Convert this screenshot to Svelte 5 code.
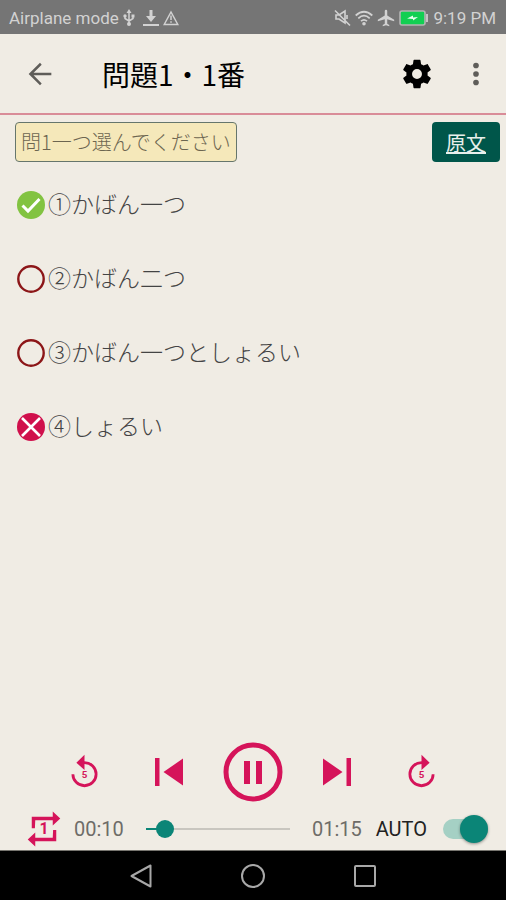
<script>
  const options = [
    { id: 1, text: '①かばん一つ', state: 'correct' },
    { id: 2, text: '②かばん二つ', state: 'open' },
    { id: 3, text: '③かばん一つとしょるい', state: 'open' },
    { id: 4, text: '④しょるい', state: 'wrong' }
  ];
  const duration = 75;

  let picked = $state(4);
  let position = $state(10);
  let auto = $state(true);

  const clock = (s) =>
    String(Math.floor(s / 60)).padStart(2, '0') + ':' + String(s % 60).padStart(2, '0');
</script>

<div class="screen">
  <div class="status">
    <span>Airplane mode</span>
    <svg class="usb" width="12" height="18" viewBox="0 0 12 18">
      <path d="M6 2v13M2 7v2.500l4 2.500 4-2.500V7" fill="none" stroke="currentColor" stroke-width="1.500" />
      <path d="M6 0l2.500 4h-5z" fill="currentColor" />
      <circle cx="6" cy="15" r="2" fill="currentColor" />
      <circle cx="2" cy="7" r="1.700" fill="currentColor" />
      <path d="M8.500 5.500h3v3h-3z" fill="currentColor" />
    </svg>
    <svg width="16" height="18" viewBox="0 0 16 18" fill="currentColor">
      <path d="M6.500 1h3v6H13l-5 6-5-6h3.500zM0 15h16v2H0z" />
    </svg>
    <svg width="16" height="18" viewBox="0 0 16 18" fill="none" stroke="currentColor" stroke-width="1.500">
      <path d="M8 3l6.800 12.500H1.200zM8 6.500v4.500M8 12.200v1.600" />
    </svg>
    <span class="fill"></span>
    <svg width="17" height="18" viewBox="0 0 17 18" fill="none" stroke="currentColor" stroke-width="1.600">
      <path d="M2 6h3l6-4v12l-6-4H2zM1 1.500l15 15M13 6v4" />
    </svg>
    <svg width="18" height="18" viewBox="0 0 18 18" fill="none" stroke="currentColor" stroke-width="1.700">
      <path d="M.7 6.500Q9-1 17.300 6.500M3.300 9.400Q9 4 14.700 9.400M6 12.200Q9 9.600 12 12.200" />
      <circle cx="9" cy="14.800" r="1.800" fill="currentColor" stroke="none" />
    </svg>
    <svg width="18" height="18" viewBox="1 1 22 22" fill="currentColor">
      <path d="M22 16v-2l-8.500-5V3.500a1.500 1.500 0 0 0-3 0V9L2 14v2l8.500-2.500V19L8 20.500V22l4-1 4 1v-1.500L13.500 19v-5.500z" />
    </svg>
    <svg width="30" height="16" viewBox="0 0 30 16">
      <rect x="1" y="1" width="25" height="14" rx="2" fill="#12cf52" stroke="#b4b4b4" stroke-width="1.600" />
      <path d="M27 4h2v8h-2z" fill="#c4c4c4" />
      <path d="M8 8.500l6-3v2l5-.5-5 3.500V9z" fill="#e8fff0" />
    </svg>
    <span>9:19 PM</span>
  </div>

  <header>
    <button aria-label="Back">
      <svg width="34" height="34" viewBox="0 0 24 24" fill="#5f5d59">
        <path d="M20 11.100H7.500l5.700-5.700L12 4l-8 8 8 8 1.200-1.300-5.700-5.800H20z" />
      </svg>
    </button>
    <h1>問題1・1番</h1>
    <button aria-label="Settings">
      <svg width="34" height="34" viewBox="0 0 24 24" fill="#000">
        <path d="M19.430 12.980c.04-.32.07-.64.07-.98s-.03-.66-.07-.98l2.110-1.650c.19-.15.24-.42.12-.64l-2-3.460c-.12-.22-.39-.3-.61-.22l-2.490 1c-.52-.4-1.080-.73-1.690-.98l-.38-2.650C14.460 2.180 14.250 2 14 2h-4c-.25 0-.46.18-.49.42l-.38 2.650c-.61.25-1.170.59-1.690.98l-2.490-1c-.23-.09-.49 0-.61.22l-2 3.460c-.13.22-.07.49.12.64l2.110 1.650c-.04.32-.07.65-.07.98s.03.66.07.98l-2.110 1.650c-.19.15-.24.42-.12.64l2 3.460c.12.22.39.3.61.22l2.490-1c.52.4 1.080.73 1.690.98l.38 2.650c.03.24.24.42.49.42h4c.25 0 .46-.18.49-.42l.38-2.650c.61-.25 1.170-.59 1.690-.98l2.490 1c.23.09.49 0 .61-.22l2-3.460c.12-.22.07-.49-.12-.64zM12 15.500a3.500 3.500 0 1 1 0-7 3.500 3.500 0 0 1 0 7z" />
      </svg>
    </button>
    <button class="more" aria-label="More options">
      <svg width="34" height="34" viewBox="0 0 24 24" fill="#5f5d59">
        <circle cx="12" cy="6" r="2" /><circle cx="12" cy="12" r="2" /><circle cx="12" cy="18" r="2" />
      </svg>
    </button>
  </header>

  <main>
    <div class="top">
      <p id="question">問1一つ選んでください</p>
      <button class="script">原文</button>
    </div>
    <div class="options" role="radiogroup" aria-labelledby="question">
      {#each options as o (o.id)}
        <label>
          <input type="radio" name="answer" value={o.id} bind:group={picked} />
          <svg width="28" height="28" viewBox="0 0 28 28" fill="none">
            {#if o.state === 'correct'}
              <circle cx="14" cy="14" r="14" fill="#82c341" />
              <path d="M5.500 14.500l5.500 5.500L22.500 8" stroke="#fff" stroke-width="3" />
            {:else if o.state === 'wrong'}
              <circle cx="14" cy="14" r="14" fill="#d0104c" />
              <path d="M5 5l18 18M23 5L5 23" stroke="#fff" stroke-width="2.600" />
            {:else}
              <circle cx="14" cy="14" r="12.700" stroke="#8c1618" stroke-width="2.400" />
            {/if}
          </svg>
          <span>{o.text}</span>
        </label>
      {/each}
    </div>
  </main>

  <div class="player">
    <div class="controls">
      <button aria-label="Back 5 seconds">
        <svg width="39" height="39" viewBox="0 0 24 24" fill="currentColor">
          <path d="M12 5V1L7 6l5 4.500V6.700a6.300 6.300 0 1 1-6.300 6.300H4a8 8 0 1 0 8-8z" />
          <text x="12" y="15.500" font-size="6" text-anchor="middle">5</text>
        </svg>
      </button>
      <button aria-label="Previous">
        <svg width="30" height="28" viewBox="0 0 30 28" fill="currentColor">
          <path d="M1 0h4.500v28H1zM29 .5v27L9.500 14z" />
        </svg>
      </button>
      <button aria-label="Pause">
        <svg width="60" height="60" viewBox="0 0 60 60" fill="currentColor">
          <circle cx="30" cy="30" r="27" fill="none" stroke="currentColor" stroke-width="5" />
          <path d="M21 19h6v23h-6zM33 19h6v23h-6z" />
        </svg>
      </button>
      <button aria-label="Next">
        <svg width="30" height="28" viewBox="0 0 30 28" fill="currentColor">
          <path d="M24.500 0H29v28h-4.500zM1 .5v27L20.500 14z" />
        </svg>
      </button>
      <button aria-label="Forward 5 seconds">
        <svg width="39" height="39" viewBox="0 0 24 24" fill="currentColor">
          <path d="M12 5V1l5 5-5 4.500V6.700a6.300 6.300 0 1 0 6.300 6.300H20a8 8 0 1 1-8-8z" />
          <text x="12" y="15.500" font-size="6" text-anchor="middle">5</text>
        </svg>
      </button>
    </div>
    <div class="progress">
      <button class="repeat" aria-label="Repeat one">
        <svg width="44" height="42" viewBox="0 0 24 24" fill="currentColor">
          <path d="M7 7h10v3l4.300-4L17 2v3H5v6.500h1.800zM17 17H7v-3l-4.300 4L7 22v-3h12v-6.500h-1.800z" />
          <text x="12" y="15" font-size="9" text-anchor="middle">1</text>
        </svg>
      </button>
      <span class="time">{clock(position)}</span>
      <input
        class="seek"
        type="range"
        min="0"
        max={duration}
        bind:value={position}
        aria-label="Position"
        style="--played: {position / duration}"
      />
      <span class="time">{clock(duration)}</span>
      <label class="auto" for="auto">AUTO</label>
      <input id="auto" class="switch" type="checkbox" role="switch" bind:checked={auto} />
    </div>
  </div>

  <nav>
    <button aria-label="System back">
      <svg width="24" height="24" viewBox="0 0 24 24"><path d="M21.500 1.500v21L2.500 12z" /></svg>
    </button>
    <button aria-label="Home">
      <svg width="26" height="26" viewBox="0 0 26 26"><circle cx="13" cy="13" r="11" /></svg>
    </button>
    <button aria-label="Recent apps">
      <svg width="24" height="24" viewBox="0 0 24 24"><rect x="2" y="2" width="20" height="20" rx="1" /></svg>
    </button>
  </nav>
</div>

<style>
  :global(body) {
    margin: 0;
  }
  .screen {
    min-height: 100vh;
    display: flex;
    flex-direction: column;
    background: #f0ece4;
    font-family: Roboto, 'Noto Sans CJK JP', sans-serif;
    color: #555;
  }
  button {
    border: 0;
    padding: 0;
    background: none;
    color: inherit;
    font: inherit;
    display: flex;
    align-items: center;
    justify-content: center;
    cursor: pointer;
  }
  svg {
    display: block;
    flex: none;
  }
  .status {
    height: 34px;
    box-sizing: border-box;
    padding: 2px 10px 0 9px;
    display: flex;
    align-items: center;
    gap: 4px;
    background: #757575;
    color: #d2d2d2;
    font-size: 17px;
  }
  .usb {
    margin-right: 4px;
  }
  .fill {
    flex: 1;
  }
  header {
    height: 79px;
    padding: 0 13px 0 23px;
    display: flex;
    align-items: center;
    border-bottom: 2px solid #d98c98;
  }
  h1 {
    flex: 1;
    margin: 0 0 0 45px;
    font: 400 28px/40px 'Noto Sans CJK JP', sans-serif;
    color: #000;
  }
  .more {
    margin-left: 25px;
  }
  main {
    flex: 1;
    padding: 7px 6px 0 15px;
    font-family: 'Noto Sans CJK JP', sans-serif;
  }
  .top {
    display: flex;
    justify-content: space-between;
    align-items: center;
  }
  .top p {
    margin: 0;
    padding: 0 5px;
    border: 1px solid #66766c;
    border-radius: 4px;
    background: #f5e8ba;
    color: #6c6550;
    font-size: 20px;
    font-weight: 300;
    line-height: 38px;
  }
  .script {
    width: 68px;
    height: 40px;
    border-radius: 4px;
    background: #00564a;
    color: #e8f0ec;
    font-size: 20px;
    text-decoration: underline;
  }
  .options {
    margin-top: 6px;
  }
  .options label {
    position: relative;
    height: 74px;
    padding-left: 2px;
    display: flex;
    align-items: center;
    gap: 3px;
    font-size: 23px;
    font-weight: 300;
    color: #444;
  }
  .options span {
    padding-bottom: 4px;
  }
  .options input {
    position: absolute;
    inset: 0;
    margin: 0;
    opacity: 0;
    cursor: pointer;
  }
  .controls {
    display: flex;
    justify-content: center;
    height: 72px;
    color: #d5145a;
  }
  .controls button {
    width: 16.666%;
  }
  svg text {
    font-family: Roboto, sans-serif;
    font-weight: 700;
  }
  .progress {
    height: 42px;
    padding: 0 18px 0 22px;
    display: flex;
    align-items: center;
    font-size: 20px;
  }
  .repeat {
    color: #d5145a;
    margin-right: 8px;
  }
  .time {
    color: #6e6c68;
  }
  .seek {
    appearance: none;
    flex: 1;
    min-width: 0;
    height: 20px;
    margin: 0 13px;
    background: none;
  }
  .seek::-webkit-slider-runnable-track {
    height: 18px;
    background:
      linear-gradient(#0b8577, #0b8577) 9px 50% / calc((100% - 18px) * var(--played)) 2px no-repeat,
      linear-gradient(#c9c6bf, #c9c6bf) 50% 50% / calc(100% - 18px) 2px no-repeat;
  }
  .seek::-webkit-slider-thumb {
    appearance: none;
    width: 18px;
    height: 18px;
    border-radius: 50%;
    background: #0b8577;
  }
  .auto {
    margin: 0 16px 0 14px;
    color: #222;
  }
  .switch {
    appearance: none;
    position: relative;
    flex: none;
    width: 45px;
    height: 20px;
    margin: 0;
    border-radius: 10px;
    background: #a5d0c4;
    cursor: pointer;
  }
  .switch::before {
    content: '';
    position: absolute;
    top: -4px;
    left: 0;
    width: 28px;
    height: 28px;
    border-radius: 50%;
    background: #0b8577;
    box-shadow: 0 1px 3px #0006;
  }
  .switch:checked::before {
    left: 17px;
  }
  nav {
    height: 49px;
    display: flex;
    justify-content: center;
    border-top: 1px solid #77756f;
    background: #000;
  }
  nav button {
    width: 112px;
  }
  nav svg {
    fill: none;
    stroke: #a8a8a8;
    stroke-width: 2;
    stroke-linejoin: round;
  }
</style>
